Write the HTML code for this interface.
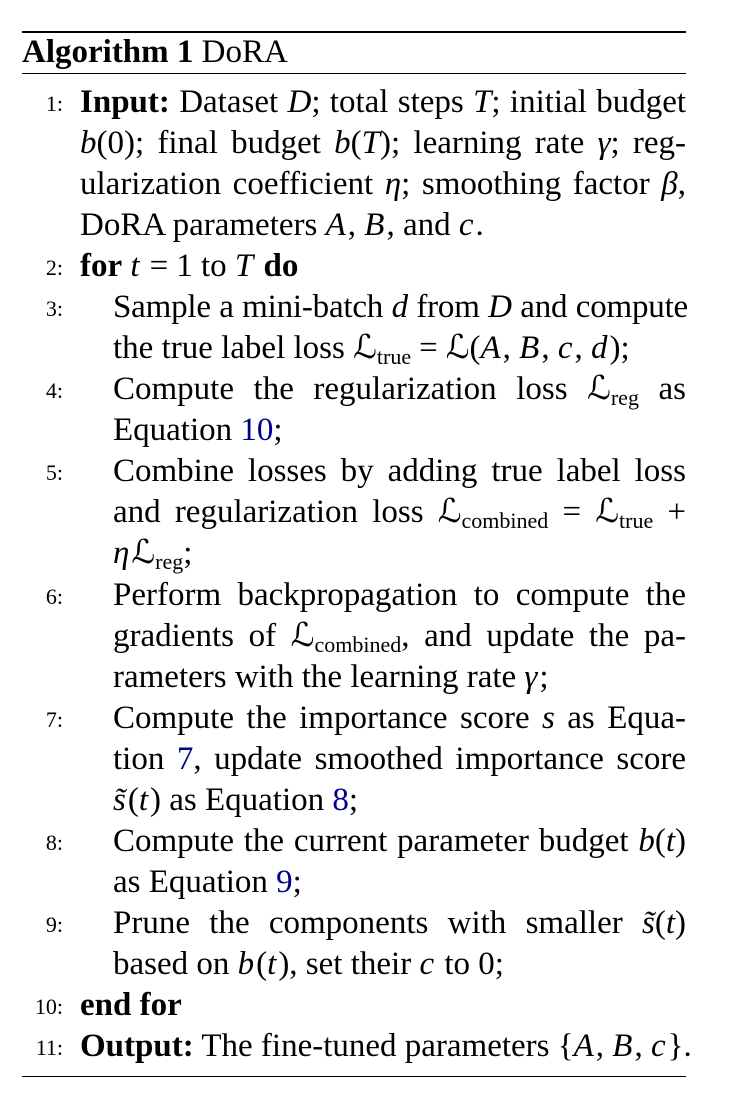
<!DOCTYPE html>
<html><head><meta charset="utf-8"><style>
body{margin:0;background:#fff;width:730px;height:1093px;position:relative;overflow:hidden;font-family:"Liberation Serif",serif;color:#000}
.r{position:absolute;left:22px;width:664px;background:#000}
.l{position:absolute;height:41px;line-height:41px;font-size:33px;white-space:nowrap}
.j{text-align:justify;text-align-last:justify;white-space:normal;overflow:hidden}
.n{position:absolute;width:50px;left:13px;text-align:right;font-size:22px;height:41px;line-height:43px}
i{font-style:italic;padding-right:2px}
.j i{padding-right:0}
sub{font-size:22px;vertical-align:-6px;line-height:0}
.c{color:#00008b}
.m{margin:0 8px}
</style></head><body>
<div class="r" style="top:31px;height:2px"></div>
<div class="l" style="top:32px;left:22px"><b>Algorithm 1</b> DoRA</div>
<div class="r" style="top:73px;height:1px"></div>

<div class="n" style="top:82px">1:</div>
<div class="l j" style="top:82px;left:80px;width:606px"><b>Input:</b> Dataset <i>D</i>; total steps <i>T</i>; initial budget</div>
<div class="l j" style="top:123px;left:80px;width:606px"><i>b</i>(0); final budget <i>b</i>(<i>T</i>); learning rate <i>γ</i>; reg-</div>
<div class="l j" style="top:164px;left:80px;width:606px">ularization coefficient <i>η</i>; smoothing factor <i>β</i>,</div>
<div class="l" style="top:205px;left:80px">DoRA parameters <i>A</i>, <i>B</i>, and <i>c</i>.</div>

<div class="n" style="top:246px">2:</div>
<div class="l" style="top:246px;left:80px"><b>for</b> <i>t</i><span class="m">=</span>1 to <i>T</i> <b>do</b></div>

<div class="n" style="top:287px">3:</div>
<div class="l j" style="top:287px;left:113px;width:575px;letter-spacing:-0.2px">Sample a mini-batch <i>d</i> from <i>D</i> and compute</div>
<div class="l" style="top:328px;left:113px">the true label loss ℒ<sub>true</sub><span class="m">=</span>ℒ(<i>A</i>, <i>B</i>, <i>c</i>, <i>d</i>);</div>

<div class="n" style="top:369px">4:</div>
<div class="l j" style="top:369px;left:113px;width:573px">Compute the regularization loss ℒ<sub>reg</sub> as</div>
<div class="l" style="top:410px;left:113px">Equation <span class="c">10</span>;</div>

<div class="n" style="top:451px">5:</div>
<div class="l j" style="top:451px;left:113px;width:573px">Combine losses by adding true label loss</div>
<div class="l j" style="top:492px;left:113px;width:573px">and regularization loss ℒ<sub>combined</sub> = ℒ<sub>true</sub> +</div>
<div class="l" style="top:533px;left:113px"><i>η</i>ℒ<sub>reg</sub>;</div>

<div class="n" style="top:575px">6:</div>
<div class="l j" style="top:575px;left:113px;width:573px">Perform backpropagation to compute the</div>
<div class="l j" style="top:616px;left:113px;width:573px">gradients of ℒ<sub>combined</sub>, and update the pa-</div>
<div class="l" style="top:657px;left:113px">rameters with the learning rate <i>γ</i>;</div>

<div class="n" style="top:698px">7:</div>
<div class="l j" style="top:698px;left:113px;width:573px">Compute the importance score <i>s</i> as Equa-</div>
<div class="l j" style="top:739px;left:113px;width:573px">tion <span class="c">7</span>, update smoothed importance score</div>
<div class="l" style="top:780px;left:113px"><i>s̃</i>(<i>t</i>) as Equation <span class="c">8</span>;</div>

<div class="n" style="top:821px">8:</div>
<div class="l j" style="top:821px;left:113px;width:573px">Compute the current parameter budget <i>b</i>(<i>t</i>)</div>
<div class="l" style="top:862px;left:113px">as Equation <span class="c">9</span>;</div>

<div class="n" style="top:903px">9:</div>
<div class="l j" style="top:903px;left:113px;width:573px">Prune the components with smaller <i>s̃</i>(<i>t</i>)</div>
<div class="l" style="top:944px;left:113px">based on <i>b</i>(<i>t</i>), set their <i>c</i> to 0;</div>

<div class="n" style="top:985px">10:</div>
<div class="l" style="top:985px;left:80px"><b>end for</b></div>

<div class="n" style="top:1026px">11:</div>
<div class="l" style="top:1026px;left:80px"><b>Output:</b> The fine-tuned parameters {<i>A</i>, <i>B</i>, <i>c</i>}.</div>

<div class="r" style="top:1076px;height:1px"></div>
</body></html>
